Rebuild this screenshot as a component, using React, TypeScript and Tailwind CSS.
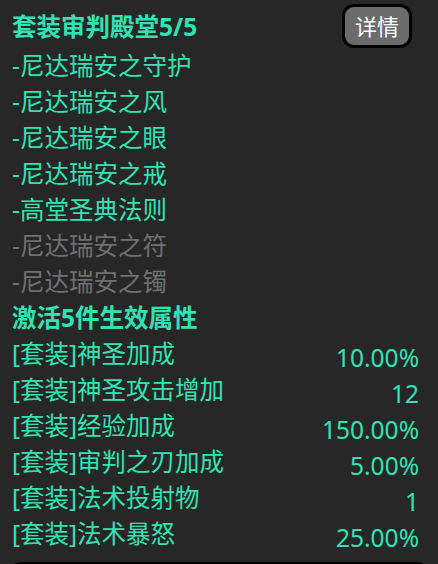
const parts = [
  { name: "-尼达瑞安之守护", on: true },
  { name: "-尼达瑞安之风", on: true },
  { name: "-尼达瑞安之眼", on: true },
  { name: "-尼达瑞安之戒", on: true },
  { name: "-高堂圣典法则", on: true },
  { name: "-尼达瑞安之符", on: false },
  { name: "-尼达瑞安之镯", on: false },
];

const stats = [
  { label: "[套装]神圣加成", value: "10.00%" },
  { label: "[套装]神圣攻击增加", value: "12" },
  { label: "[套装]经验加成", value: "150.00%" },
  { label: "[套装]审判之刃加成", value: "5.00%" },
  { label: "[套装]法术投射物", value: "1" },
  { label: "[套装]法术暴怒", value: "25.00%" },
];

export default function App() {
  return (
    <div
      className="h-[564px] w-[438px] overflow-hidden bg-[#272727] pt-[6px] text-[24.5px] text-[#31e3b3]"
      style={{ fontFamily: '"Noto Sans", "Noto Sans CJK SC", sans-serif' }}
    >
      <div className="flex h-[42px] items-start justify-between pl-[12px] pr-[26px]">
        <span className="font-bold leading-[42px]">套装审判殿堂5/5</span>
        <button className="-mt-[2px] flex h-[44px] w-[70px] items-center justify-center rounded-[12px] border-[3px] border-black bg-[#6b6b6b] text-[22px] leading-none text-white">
          详情
        </button>
      </div>

      <div className="pl-[12px]">
        {parts.map((p) => (
          <div
            key={p.name}
            className={`h-[36px] leading-[36px] ${p.on ? "text-[#31e3b3]" : "text-[#707070]"}`}
          >
            {p.name}
          </div>
        ))}

        <div className="h-[36px] font-bold leading-[36px]">激活5件生效属性</div>

        {stats.map((s) => (
          <div key={s.label} className="flex h-[36px] justify-between pr-[19px] leading-[36px]">
            <span>{s.label}</span>
            <span className="translate-y-[4px]">{s.value}</span>
          </div>
        ))}
      </div>

      <div className="mx-[12px] mt-[10px] h-[10px] rounded-t-[8px] bg-black" />
    </div>
  );
}
